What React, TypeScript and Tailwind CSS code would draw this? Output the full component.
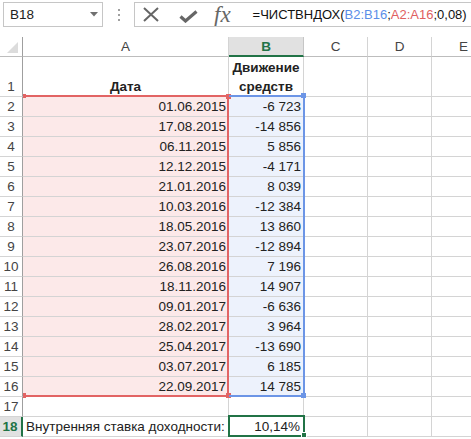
import React from "react";

const dates = [
  "01.06.2015", "17.08.2015", "06.11.2015", "12.12.2015", "21.01.2016",
  "10.03.2016", "18.05.2016", "23.07.2016", "26.08.2016", "18.11.2016",
  "09.01.2017", "28.02.2017", "25.04.2017", "03.07.2017", "22.09.2017",
];
const vals = [
  "-6 723", "-14 856", "5 856", "-4 171", "8 039", "-12 384", "13 860", "-12 894",
  "7 196", "14 907", "-6 636", "3 964", "-13 690", "6 185", "14 785",
].map((v) => v.replace(" ", "\u00a0"));

const G = "border-[#d4d4d4]";

function RowHead({ n, sel = false }: { n: number; sel?: boolean }) {
  if (sel) {
    return (
      <div className={`flex w-[23px] shrink-0 items-end justify-center border-b border-r-2 ${G} border-r-[#217346] bg-[#e1e1e1] pr-[1px] font-bold leading-[19px] text-[#217346]`}>
        {n}
      </div>
    );
  }
  return (
    <div className={`flex w-[23px] shrink-0 items-end justify-center border-b border-r ${G} border-r-[#9f9f9f] leading-[19px] text-[#444]`}>
      {n}
    </div>
  );
}

function Empty({ w }: { w: string }) {
  return <div className={`${w} shrink-0 border-b border-r ${G}`} />;
}

export default function App() {
  return (
    <div className="relative h-[439px] w-[471px] overflow-hidden bg-white font-['Liberation_Sans',Arial,sans-serif] text-[13px] text-[#222]">
      {/* formula bar */}
      <div className="flex h-[37px] items-start pt-[2px]">
        <div className="ml-[3px] flex h-[25px] w-[100px] shrink-0 items-center justify-between border border-[#c6c6c6] pl-[6px] pr-[4px] text-[13.5px] leading-[23px]">
          <span>B18</span>
          <svg width="8" height="5" viewBox="0 0 8 5">
            <path d="M0 0H8L4 4.5Z" fill="#707070" />
          </svg>
        </div>
        <div className="flex h-[25px] w-[31px] shrink-0 flex-col items-center justify-center gap-[3px]">
          <div className="h-[2px] w-[2px] bg-[#a0a0a0]" />
          <div className="h-[2px] w-[2px] bg-[#a0a0a0]" />
          <div className="h-[2px] w-[2px] bg-[#a0a0a0]" />
        </div>
        <div className="flex h-[25px] flex-1 items-center overflow-hidden whitespace-nowrap border border-r-0 border-[#c6c6c6]">
          <svg className="ml-[8px] shrink-0" width="16" height="15" viewBox="0 0 16 15">
            <path d="M1 1L15 14M15 1L1 14" stroke="#666" strokeWidth="2" />
          </svg>
          <svg className="ml-[20px] mt-[4px] shrink-0" width="19" height="13" viewBox="0 0 19 13">
            <path d="M1.5 6.5L6.5 11L17.5 1.5" stroke="#666" strokeWidth="3.2" fill="none" />
          </svg>
          <span className="ml-[16px] shrink-0 font-['Liberation_Serif',serif] text-[23px] italic leading-[23px] text-[#666]">
            fx
          </span>
          <span className="ml-[22px] text-[13px] leading-[23px] text-[#111]">
            =ЧИСТВНДОХ(<span className="text-[#5b8ee8]">B2:B16</span>;<span className="text-[#e0605f]">A2:A16</span>;0,08)
          </span>
        </div>
      </div>

      {/* sheet */}
      <div className="relative text-[13.5px]">
        {/* column headers */}
        <div className="flex h-[20px] leading-[19px] text-[#444]">
          <div className="relative w-[23px] shrink-0 border-b border-r border-b-[#bdbdbd] border-r-[#9f9f9f]">
            <svg className="absolute bottom-[3px] right-[4px]" width="11" height="11" viewBox="0 0 11 11">
              <polygon points="11,0 11,11 0,11" fill="#dcdcdc" />
            </svg>
          </div>
          <div className={`w-[206px] shrink-0 border-b border-r border-b-[#bdbdbd] ${G} text-center`}>A</div>
          <div className="w-[75px] shrink-0 border-b-2 border-r border-b-[#217346] border-r-[#c6c6c6] bg-[#e1e1e1] text-center font-bold text-[#217346]">B</div>
          <div className={`w-[64px] shrink-0 border-b border-r border-b-[#bdbdbd] ${G} text-center`}>C</div>
          <div className={`w-[64px] shrink-0 border-b border-r border-b-[#bdbdbd] ${G} text-center`}>D</div>
          <div className={`w-[64px] shrink-0 border-b border-r border-b-[#bdbdbd] ${G} text-center`}>E</div>
        </div>

        {/* row 1 */}
        <div className="flex h-[40px]">
          <RowHead n={1} />
          <div className={`flex w-[206px] shrink-0 items-end justify-center border-b border-r ${G} font-bold leading-[19px]`}>Дата</div>
          <div className={`flex w-[75px] shrink-0 flex-col items-center justify-end border-b border-r ${G} font-bold leading-[19px]`}>
            <span>Движение</span>
            <span>средств</span>
          </div>
          <Empty w="w-[64px]" />
          <Empty w="w-[64px]" />
          <Empty w="w-[64px]" />
        </div>

        {dates.map((d, i) => (
          <div key={d} className="flex h-[20px] leading-[19px]">
            <RowHead n={i + 2} />
            <div className={`w-[206px] shrink-0 border-b border-r ${G} bg-[#fce9e9] pr-[2px] text-right`}>{d}</div>
            <div className={`w-[75px] shrink-0 border-b border-r ${G} bg-[#edf2fc] pr-[2px] text-right`}>{vals[i]}</div>
            <Empty w="w-[64px]" />
            <Empty w="w-[64px]" />
            <Empty w="w-[64px]" />
          </div>
        ))}

        {/* row 17 */}
        <div className="flex h-[20px] leading-[19px]">
          <RowHead n={17} />
          <Empty w="w-[206px]" />
          <Empty w="w-[75px]" />
          <Empty w="w-[64px]" />
          <Empty w="w-[64px]" />
          <Empty w="w-[64px]" />
        </div>

        {/* row 18 */}
        <div className="flex h-[20px] leading-[19px]">
          <RowHead n={18} sel />
          <div className={`w-[206px] shrink-0 overflow-hidden whitespace-nowrap border-b border-r ${G} pl-[3px]`}>
            Внутренняя ставка доходности:
          </div>
          <div className={`w-[75px] shrink-0 border-b border-r ${G} pr-[3px] text-right`}>10,14%</div>
          <Empty w="w-[64px]" />
          <Empty w="w-[64px]" />
          <Empty w="w-[64px]" />
        </div>

        {/* red range A2:A16 */}
        <div className="pointer-events-none absolute left-[23px] top-[58px] h-[302px] w-[206px] border-b-2 border-r-2 border-t-2 border-[#e26464]" />
        <div className="absolute left-[23px] top-[57px] h-[4px] w-[3px] bg-[#e26464]" />
        <div className="absolute left-[226px] top-[57px] h-[5px] w-[5px] bg-[#e26464]" />
        <div className="absolute left-[23px] top-[356px] h-[5px] w-[3px] bg-[#e26464]" />
        <div className="absolute left-[226px] top-[356px] h-[5px] w-[5px] bg-[#e26464]" />

        {/* blue range B2:B16 */}
        <div className="pointer-events-none absolute left-[229px] top-[58px] h-[302px] w-[76px] border-b-2 border-r-2 border-t-2 border-[#6c95e6]" />
        <div className="absolute left-[301px] top-[56px] h-[5px] w-[5px] bg-[#6c95e6]" />
        <div className="absolute left-[301px] top-[356px] h-[5px] w-[5px] bg-[#6c95e6]" />

        {/* active cell B18 */}
        <div className="pointer-events-none absolute left-[228px] top-[378px] h-[22px] w-[77px] border-2 border-[#217346]" />
        <div className="absolute left-[301px] top-[395px] h-[6px] w-[6px] border border-white bg-[#217346]" />
      </div>
    </div>
  );
}
